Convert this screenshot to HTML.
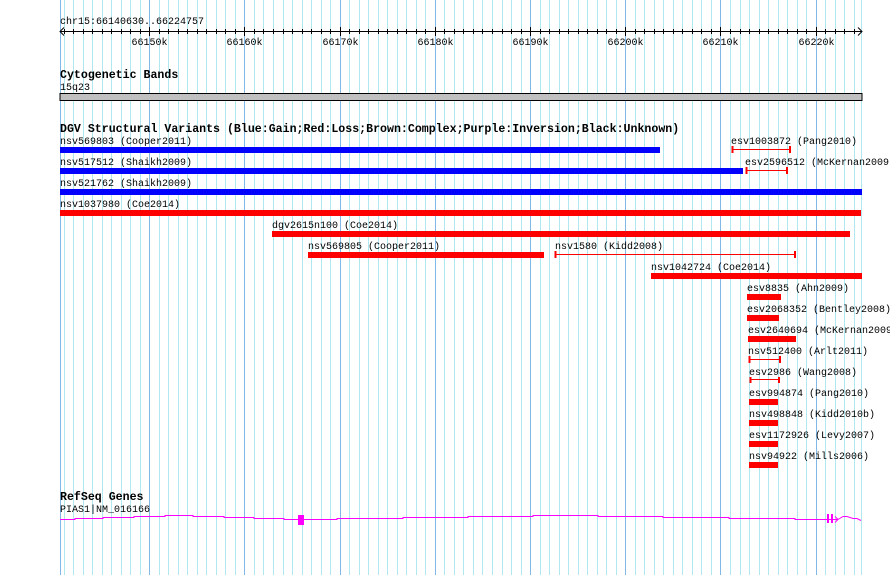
<!DOCTYPE html>
<html><head><meta charset="utf-8"><style>
html,body{margin:0;padding:0;background:#fff;width:890px;height:575px;overflow:hidden}
svg{display:block}
text{font-family:"Liberation Mono","DejaVu Sans Mono",monospace;font-size:10px;fill:#000}
.b{font-weight:bold;font-size:11.6px}
</style></head><body>
<svg id="s" width="890" height="575" xmlns="http://www.w3.org/2000/svg">
<g id="grid"></g>
<g id="ruler" stroke="#000" stroke-width="1"></g>
<text x="60" y="24">chr15:66140630..66224757</text>
<line x1="60" y1="31.5" x2="862" y2="31.5" stroke="#000"/>
<path d="M64 27.5 L60 31.5 L64 35.5" fill="none" stroke="#000"/>
<path d="M858 27.5 L862 31.5 L858 35.5" fill="none" stroke="#000"/>
<g id="labels"></g>
<text class="b" x="60" y="78">Cytogenetic Bands</text>
<text x="60" y="90">15q23</text>
<rect x="60" y="93.5" width="802" height="7" fill="#c0c0c0" stroke="#000"/>
<text class="b" x="60" y="132">DGV Structural Variants (Blue:Gain;Red:Loss;Brown:Complex;Purple:Inversion;Black:Unknown)</text>

<text x="60" y="144">nsv569803 (Cooper2011)</text>
<rect x="60" y="147" width="600" height="6" fill="#0000ff"/>
<text x="731" y="144">esv1003872 (Pang2010)</text>
<g stroke="#f00"><line x1="732" y1="149.5" x2="790" y2="149.5"/><line x1="732.5" y1="146" x2="732.5" y2="153" stroke-width="2"/><line x1="790" y1="146" x2="790" y2="153" stroke-width="2"/></g>

<text x="60" y="165">nsv517512 (Shaikh2009)</text>
<rect x="60" y="168" width="683" height="6" fill="#0000ff"/>
<text x="745" y="165">esv2596512 (McKernan2009</text>
<g stroke="#f00"><line x1="746" y1="170.5" x2="787" y2="170.5"/><line x1="746.5" y1="167" x2="746.5" y2="174" stroke-width="2"/><line x1="787" y1="167" x2="787" y2="174" stroke-width="2"/></g>

<text x="60" y="186">nsv521762 (Shaikh2009)</text>
<rect x="60" y="189" width="802" height="6" fill="#0000ff"/>
<text x="60" y="207">nsv1037980 (Coe2014)</text>
<rect x="60" y="210" width="801" height="6" fill="#f00"/>
<text x="272" y="228">dgv2615n100 (Coe2014)</text>
<rect x="272" y="231" width="578" height="6" fill="#f00"/>
<text x="308" y="249">nsv569805 (Cooper2011)</text>
<rect x="308" y="252" width="236" height="6" fill="#f00"/>
<text x="555" y="249">nsv1580 (Kidd2008)</text>
<g stroke="#f00"><line x1="555" y1="254.5" x2="795" y2="254.5"/><line x1="555.5" y1="251" x2="555.5" y2="258" stroke-width="2"/><line x1="795" y1="251" x2="795" y2="258" stroke-width="2"/></g>
<text x="651" y="270">nsv1042724 (Coe2014)</text>
<rect x="651" y="273" width="211" height="6" fill="#f00"/>

<text x="747" y="291">esv8835 (Ahn2009)</text>
<rect x="747" y="294" width="34" height="6" fill="#f00"/>
<text x="747" y="312">esv2068352 (Bentley2008)</text>
<rect x="747" y="315" width="32" height="6" fill="#f00"/>
<text x="748" y="333">esv2640694 (McKernan2009</text>
<rect x="748" y="336" width="48" height="6" fill="#f00"/>
<text x="748" y="354">nsv512400 (Arlt2011)</text>
<g stroke="#f00"><line x1="749" y1="359.5" x2="780" y2="359.5"/><line x1="749.5" y1="356" x2="749.5" y2="363" stroke-width="2"/><line x1="780" y1="356" x2="780" y2="363" stroke-width="2"/></g>
<text x="749" y="375">esv2986 (Wang2008)</text>
<g stroke="#f00"><line x1="750" y1="379.5" x2="779" y2="379.5"/><line x1="750.5" y1="377" x2="750.5" y2="383" stroke-width="2"/><line x1="779" y1="377" x2="779" y2="383" stroke-width="2"/></g>
<text x="749" y="396">esv994874 (Pang2010)</text>
<rect x="749" y="399" width="29" height="6" fill="#f00"/>
<text x="749" y="417">nsv498848 (Kidd2010b)</text>
<rect x="749" y="420" width="29" height="6" fill="#f00"/>
<text x="749" y="438">esv1172926 (Levy2007)</text>
<rect x="749" y="441" width="29" height="6" fill="#f00"/>
<text x="749" y="459">nsv94922 (Mills2006)</text>
<rect x="749" y="462" width="29" height="6" fill="#f00"/>

<text class="b" x="60" y="500">RefSeq Genes</text>
<text x="60" y="512">PIAS1|NM_016166</text>
<polyline fill="none" stroke="#ff00ff" stroke-width="1" points="60,519.5 75,519.5 75,518.5 103,518.5 103,517.5 134,517.5 134,516.5 165,516.5 165,515.5 193,515.5 193,516.5 224,516.5 224,517.5 254,517.5 254,518.5 284,518.5 284,519.5 298,519.5"/>
<rect x="298" y="515" width="6" height="10" fill="#ff00ff"/>
<polyline fill="none" stroke="#ff00ff" points="304,519.5 337,519.5 337,518.5 403,518.5 403,517.5 468,517.5 468,516.5 533,516.5 533,515.5 598,515.5 598,516.5 663,516.5 663,517.5 729,517.5 729,518.5 795,518.5 795,519.5 827,519.5"/>
<rect x="827" y="514" width="2" height="9" fill="#ff00ff"/>
<rect x="831" y="514" width="2" height="9" fill="#ff00ff"/>
<path d="M829 519.5 H838 M835 516.5 L838 519.5 L835 522.5 M838 519.5 L843 516.5 H847 L853 518.5 L857 518.5 L861 520.5" fill="none" stroke="#ff00ff"/>
</svg>
<script>
(function(){
var ns="http://www.w3.org/2000/svg",g=document.getElementById("grid"),r=document.getElementById("ruler"),L=document.getElementById("labels");
var s=801/84.127;function X(k){return 60+(k-66140.63)*s;}
function ln(p,x1,y1,x2,y2,c){var l=document.createElementNS(ns,"line");l.setAttribute("x1",x1);l.setAttribute("y1",y1);l.setAttribute("x2",x2);l.setAttribute("y2",y2);l.setAttribute("stroke",c);p.appendChild(l);}
ln(g,60.5,0,60.5,575,"#80b8e8");ln(g,861.5,0,861.5,575,"#b0e8f0");
for(var k=66141;k<=66224;k++){var x=Math.round(X(k))+0.5;var maj=k%10==0;
ln(g,x,0,x,575,maj?"#80b8e8":"#b0e8f0");
ln(r,x,maj?27:29,x,maj?36:34,"#000");
if(maj){var t=document.createElementNS(ns,"text");t.setAttribute("x",x);t.setAttribute("y",45);t.setAttribute("text-anchor","middle");t.textContent=(k)+"k";L.appendChild(t);}}
})();
</script>
</body></html>
